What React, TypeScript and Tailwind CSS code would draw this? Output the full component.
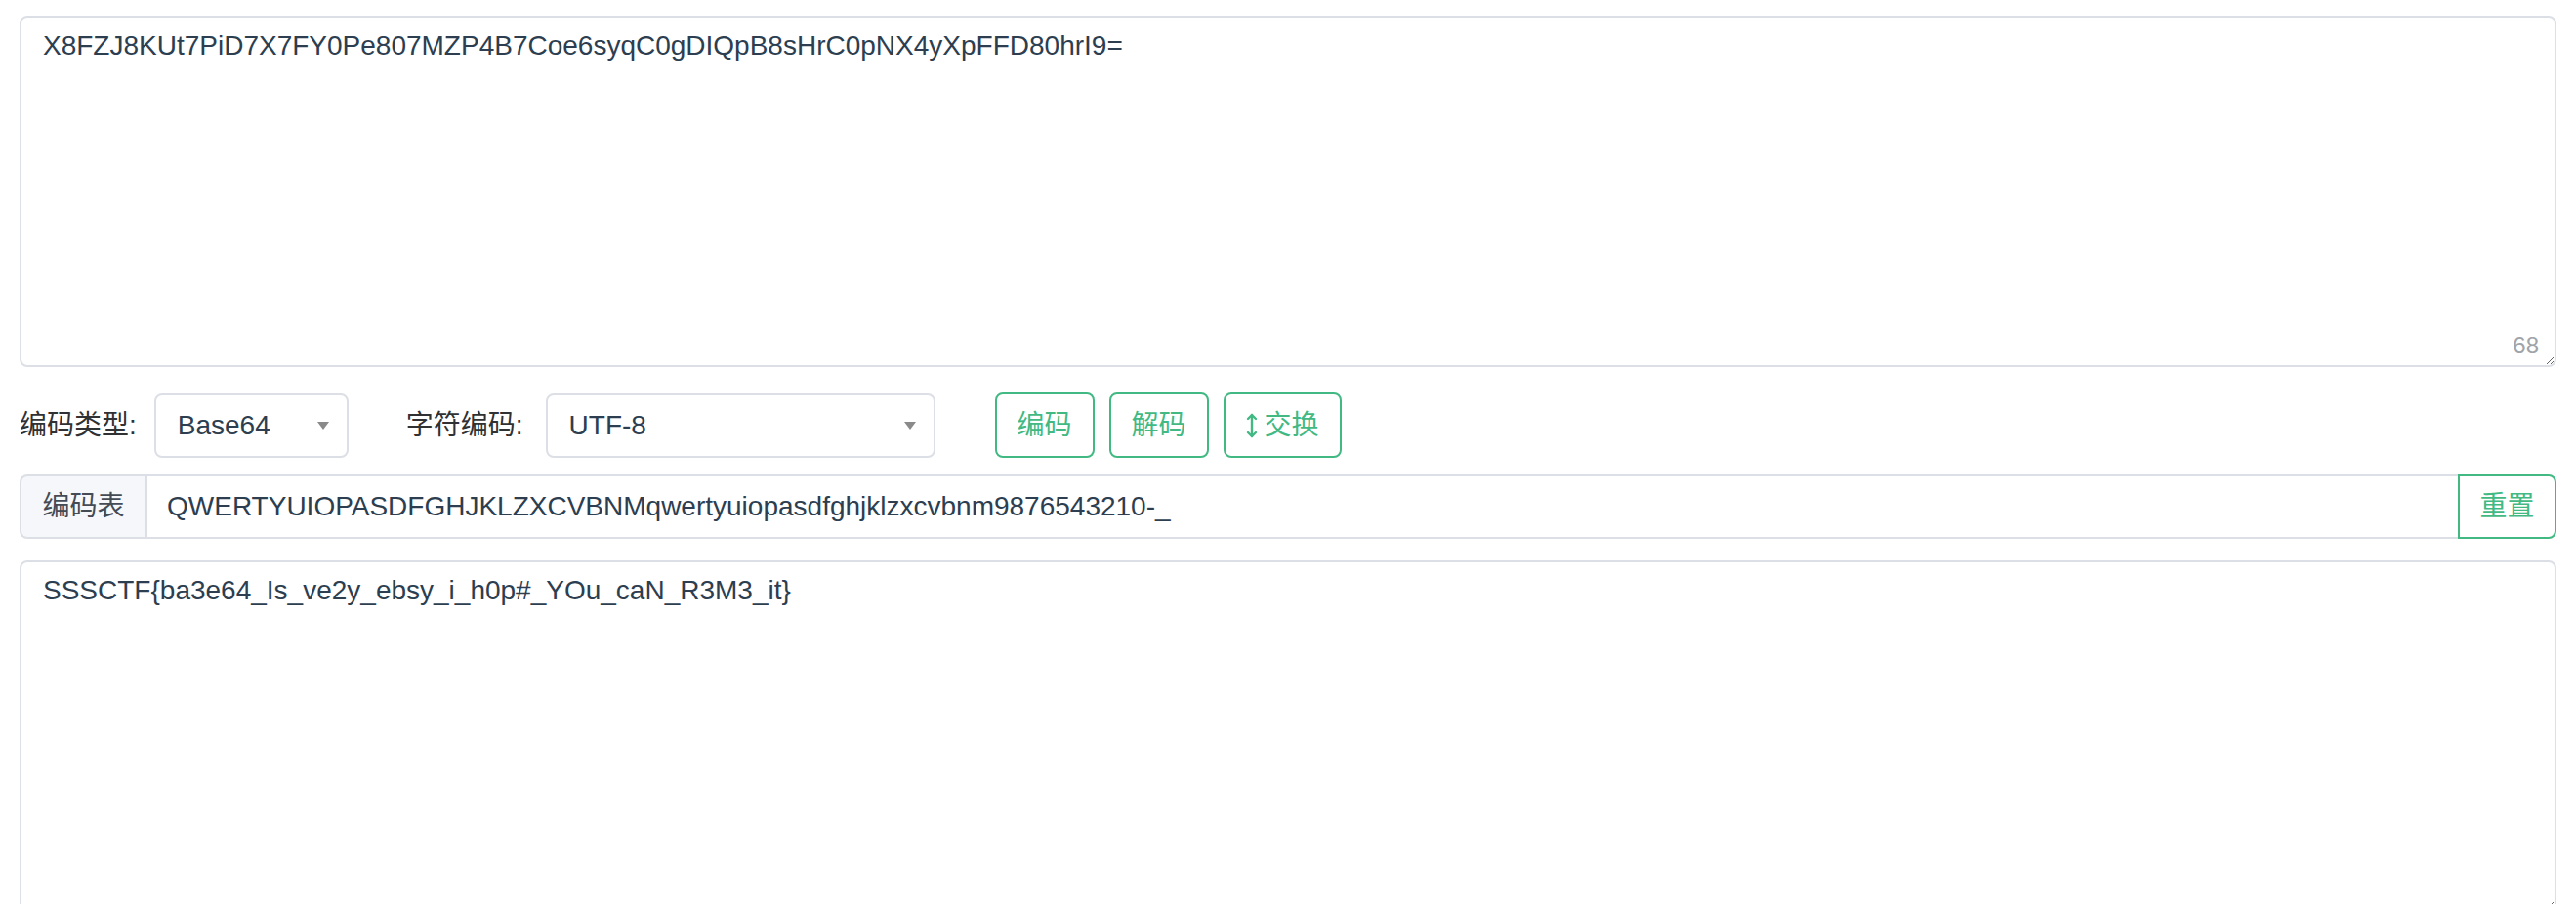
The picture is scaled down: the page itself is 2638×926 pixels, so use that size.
import React from 'react';

const input1 = 'X8FZJ8KUt7PiD7X7FY0Pe807MZP4B7Coe6syqC0gDIQpB8sHrC0pNX4yXpFFD80hrI9=';
const table = 'QWERTYUIOPASDFGHJKLZXCVBNMqwertyuiopasdfghjklzxcvbnm9876543210-_';
const output = 'SSSCTF{ba3e64_Is_ve2y_ebsy_i_h0p#_YOu_caN_R3M3_it}';

function Caret() {
  return (
    <svg width="14" height="10" viewBox="0 0 14 10" className="shrink-0">
      <path d="M1 1 L13 1 L7 9 Z" fill="#8a8a8a" />
    </svg>
  );
}

function FakeSelect({ value, width }: { value: string; width: string }) {
  return (
    <div
      className={`${width} h-[66px] flex items-center justify-between pl-[22px] pr-[17px] border-2 border-[#dcdfe6] rounded-[8px] bg-white text-[#2c3e50]`}
    >
      <span>{value}</span>
      <Caret />
    </div>
  );
}

function GreenButton({ children }: { children: React.ReactNode }) {
  return (
    <button className="h-[67px] px-[21px] flex items-center gap-[7px] border-2 border-[#42b983] rounded-[8px] bg-white text-[#42b983]">
      {children}
    </button>
  );
}

export default function App() {
  return (
    <div
      className="min-h-screen bg-white px-[20px] pt-[16px] text-[28px] text-[#2c3e50]"
      style={{ fontFamily: '"Liberation Sans", "Noto Sans CJK SC", sans-serif' }}
    >
      {/* 输入 */}
      <div className="relative">
        <textarea
          readOnly
          value={input1}
          className="block w-full h-[360px] px-[22px] py-[8px] border-2 border-[#dcdfe6] rounded-[8px] leading-[1.5] text-[#2c3e50] outline-none"
        />
        <span className="absolute right-[18px] bottom-[10px] text-[24px] leading-none text-[#a0a3a9]">68</span>
      </div>

      {/* 选项 */}
      <div className="flex items-center mt-[26px] text-[#303133]">
        <span className="mr-[18px]">编码类型:</span>
        <FakeSelect value="Base64" width="w-[199px]" />
        <span className="ml-[59px] mr-[23px]">字符编码:</span>
        <FakeSelect value="UTF-8" width="w-[399px]" />
        <div className="flex items-center gap-[15px] ml-[61px]">
          <GreenButton>编码</GreenButton>
          <GreenButton>解码</GreenButton>
          <GreenButton>
            <svg width="12" height="26" viewBox="0 0 12 26" fill="none" stroke="#42b983" strokeWidth="2.4" strokeLinecap="round" strokeLinejoin="round">
              <path d="M6 2 L6 24" />
              <path d="M2 6 L6 2 L10 6" />
              <path d="M2 20 L6 24 L10 20" />
            </svg>
            交换
          </GreenButton>
        </div>
      </div>

      {/* 编码表 */}
      <div className="flex h-[66px] mt-[17px]">
        <div className="w-[129px] flex items-center justify-center bg-[#f5f7fa] border-2 border-r-0 border-[#dcdfe6] rounded-l-[8px] text-[#444b55]">
          编码表
        </div>
        <div className="flex-1 flex items-center px-[20px] border-2 border-[#dcdfe6] border-r-0">
          {table}
        </div>
        <button className="w-[101px] flex items-center justify-center border-2 border-[#42b983] rounded-r-[8px] text-[#42b983]">
          重置
        </button>
      </div>

      {/* 输出 */}
      <textarea
        readOnly
        value={output}
        className="block w-full h-[360px] mt-[22px] px-[22px] py-[8px] border-2 border-[#dcdfe6] rounded-[8px] leading-[1.5] text-[#2c3e50] outline-none"
      />
    </div>
  );
}
